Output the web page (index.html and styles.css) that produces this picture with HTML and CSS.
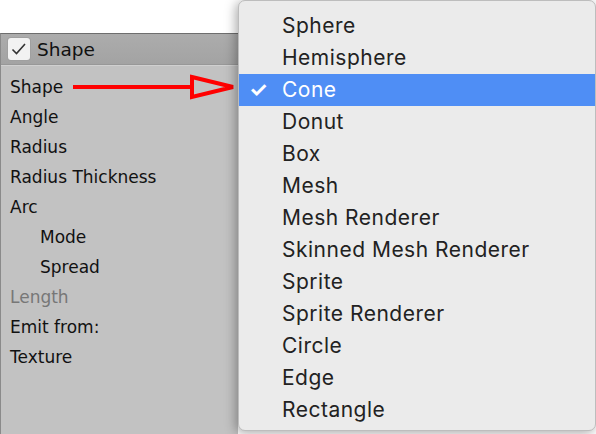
FILE: index.html
```html
<!DOCTYPE html>
<html>
<head>
<meta charset="utf-8">
<link rel="stylesheet" href="styles.css">
</head>
<body>
<div class="page">
  <div class="panel">
    <div class="header">
      <span class="checkbox">
        <svg width="22" height="22" viewBox="0 0 22 22"><path d="M4.5 11.5 L8.5 15.5 L17 6" fill="none" stroke="#333" stroke-width="1.6"/></svg>
      </span>
      <span class="title">Shape</span>
    </div>
    <div class="rows">
      <div class="row">Shape</div>
      <div class="row">Angle</div>
      <div class="row">Radius</div>
      <div class="row">Radius Thickness</div>
      <div class="row">Arc</div>
      <div class="row indent">Mode</div>
      <div class="row indent">Spread</div>
      <div class="row disabled">Length</div>
      <div class="row">Emit from:</div>
      <div class="row">Texture</div>
    </div>
  </div>
  <svg class="arrow" width="170" height="30" viewBox="0 0 170 30">
    <line x1="0" y1="15" x2="120" y2="15" stroke="#f00" stroke-width="4"/>
    <polygon points="119,5 160,15 119,25" fill="none" stroke="#f00" stroke-width="4"/>
  </svg>
  <div class="menu">
    <div class="item">Sphere</div>
    <div class="item">Hemisphere</div>
    <div class="item selected"><span class="check">✓</span>Cone</div>
    <div class="item">Donut</div>
    <div class="item">Box</div>
    <div class="item">Mesh</div>
    <div class="item">Mesh Renderer</div>
    <div class="item">Skinned Mesh Renderer</div>
    <div class="item">Sprite</div>
    <div class="item">Sprite Renderer</div>
    <div class="item">Circle</div>
    <div class="item">Edge</div>
    <div class="item">Rectangle</div>
  </div>
</div>
</body>
</html>
```
FILE: styles.css
```css
html, body {
  margin: 0;
  padding: 0;
  background: #ffffff;
  overflow: hidden;
}
.page {
  position: relative;
  width: 596px;
  height: 434px;
  overflow: hidden;
}
.panel {
  margin-top: 33px;
  width: 238px;
  height: 401px;
  box-sizing: border-box;
  background: #c2c2c2;
  border-top: 1px solid #6e6e6e;
  border-left: 1px solid #8a8a8a;
  font-family: "DejaVu Sans", Verdana, sans-serif;
  color: #111;
}
.header {
  height: 30px;
  display: flex;
  align-items: center;
  padding-left: 7px;
  gap: 7px;
  background: linear-gradient(#acacac, #a3a3a3);
  border-bottom: 1px solid #989898;
  box-shadow: 0 1px 0 #d0d0d0;
}
.checkbox {
  width: 22px;
  height: 22px;
  background: #f2f2f2;
  border-radius: 3px;
  box-shadow: 0 0 0 1px #a0a0a0;
  display: flex;
}
.title {
  font-size: 18.5px;
}
.rows {
  padding-top: 7px;
}
.row {
  height: 30px;
  line-height: 30px;
  font-size: 17px;
  padding-left: 9px;
}
.row.indent {
  padding-left: 39px;
}
.row.disabled {
  color: #777;
}
.arrow {
  position: absolute;
  left: 73px;
  top: 72px;
}
.menu {
  position: absolute;
  left: 238px;
  top: 0;
  width: 358px;
  height: 431px;
  box-sizing: border-box;
  padding-top: 9px;
  background: #ebebeb;
  border: 1px solid #bdbdbd;
  border-radius: 7px;
  box-shadow: -2px 2px 12px rgba(0,0,0,0.35);
  font-family: "Inter", "Liberation Sans", sans-serif;
  font-size: 21px;
  letter-spacing: 0.5px;
  color: #222;
}
.item {
  height: 32px;
  line-height: 32px;
  padding-left: 43px;
  position: relative;
}
.item.selected {
  background: #4f8ef5;
  color: #fff;
}
.check {
  position: absolute;
  left: 10px;
  top: 0;
  font-size: 21px;
  font-weight: bold;
}
```
